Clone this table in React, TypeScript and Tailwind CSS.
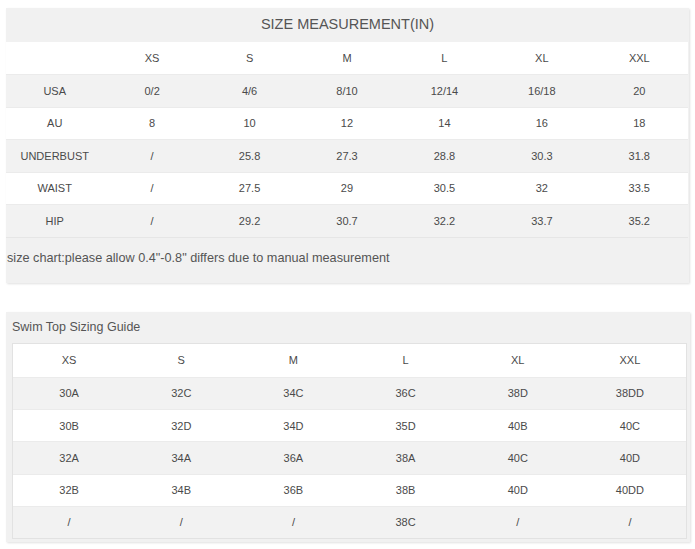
const sizes = ["XS", "S", "M", "L", "XL", "XXL"];

const measureRows: [string, string[]][] = [
  ["USA", ["0/2", "4/6", "8/10", "12/14", "16/18", "20"]],
  ["AU", ["8", "10", "12", "14", "16", "18"]],
  ["UNDERBUST", ["/", "25.8", "27.3", "28.8", "30.3", "31.8"]],
  ["WAIST", ["/", "27.5", "29", "30.5", "32", "33.5"]],
  ["HIP", ["/", "29.2", "30.7", "32.2", "33.7", "35.2"]],
];

const swimRows = [
  ["30A", "32C", "34C", "36C", "38D", "38DD"],
  ["30B", "32D", "34D", "35D", "40B", "40C"],
  ["32A", "34A", "36A", "38A", "40C", "40D"],
  ["32B", "34B", "36B", "38B", "40D", "40DD"],
  ["/", "/", "/", "38C", "/", "/"],
];

export default function App() {
  return (
    <div className="min-h-[549px] w-[695px] bg-white pt-[8px] font-['Liberation_Sans',Arial,sans-serif] text-[#4a4a4a]">
      {/* size measurement */}
      <div className="ml-[6px] w-[683px] bg-[#f1f1f1] shadow-[1px_1px_2px_rgba(0,0,0,0.12)]">
        <div className="flex h-[34px] items-center justify-center text-[14.5px] text-[#555]">
          SIZE MEASUREMENT(IN)
        </div>
        <div className="w-[682px] border-b border-[#e6e6e6] text-[11px]">
          <div className="grid h-[32px] grid-cols-7 items-center bg-white text-center">
            <div />
            {sizes.map((s) => (
              <div key={s}>{s}</div>
            ))}
          </div>
          {measureRows.map(([label, vals], i) => (
            <div
              key={label}
              className={`grid h-[32.6px] grid-cols-7 items-center border-t border-[#ebebeb] text-center ${
                i % 2 === 0 ? "bg-[#f2f2f2]" : "bg-white"
              }`}
            >
              <div>{label}</div>
              {vals.map((v, j) => (
                <div key={j}>{v}</div>
              ))}
            </div>
          ))}
        </div>
        <div className="flex h-[45px] items-start pl-[1px] pt-[11px] text-[12.7px] text-[#555]">
          size chart:please allow 0.4"-0.8" differs due to manual measurement
        </div>
      </div>

      {/* swim top */}
      <div className="ml-[6px] mt-[29px] w-[684px] bg-[#f1f1f1] pb-[3px] shadow-[1px_1px_2px_rgba(0,0,0,0.12)]">
        <div className="flex h-[31px] items-center pl-[6px] text-[12.5px] text-[#555]">
          Swim Top Sizing Guide
        </div>
        <div className="ml-[6px] w-[675px] border border-[#e2e2e2] text-[11px] shadow-[inset_1px_0_2px_rgba(0,0,0,0.08)]">
          <div className="grid h-[33px] grid-cols-6 items-center bg-white text-center">
            {sizes.map((s) => (
              <div key={s}>{s}</div>
            ))}
          </div>
          {swimRows.map((row, i) => (
            <div
              key={i}
              className={`grid h-[32.2px] grid-cols-6 items-center border-t border-[#ebebeb] text-center ${
                i % 2 === 0 ? "bg-[#f2f2f2]" : "bg-white"
              }`}
            >
              {row.map((v, j) => (
                <div key={j}>{v}</div>
              ))}
            </div>
          ))}
        </div>
      </div>
    </div>
  );
}
